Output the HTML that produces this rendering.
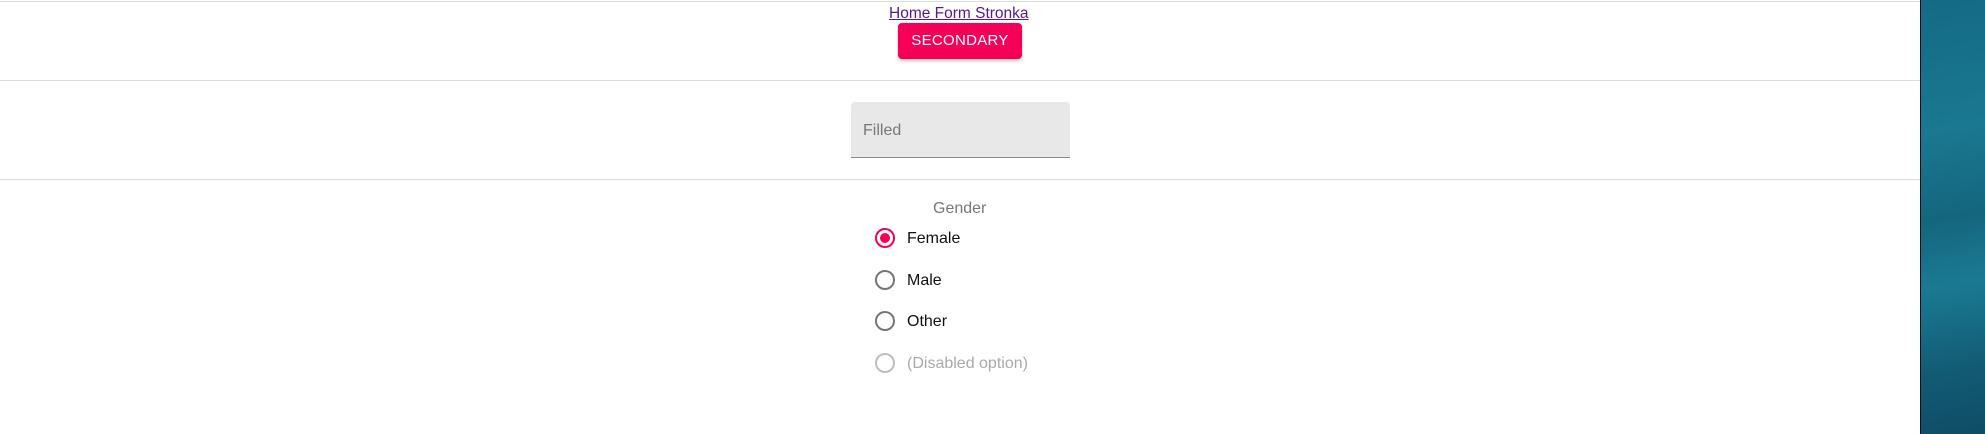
<!DOCTYPE html>
<html><head><style>
body{margin:0;width:1985px;height:434px;position:relative;background:#fff;font-family:"Liberation Sans",sans-serif;overflow:hidden}
.hr{position:absolute;left:0;width:1920px;height:1px;background:#dcdcdc}
.abs{position:absolute}
.radio{position:absolute;left:875px;width:16px;height:16px;border:2px solid #757575;border-radius:50%}
.lbl{position:absolute;left:907px;font-size:16px;color:#111;line-height:18px}
</style></head><body>
<div class="hr" style="top:1px"></div>
<a class="abs" style="left:889px;top:4px;font-size:15.5px;color:#551a8b;text-decoration:underline;line-height:19px;white-space:nowrap">Home Form Stronka</a>
<div class="abs" style="left:898px;top:23px;width:124px;height:36px;background:#f50057;border-radius:4px;box-shadow:0 2px 3px rgba(0,0,0,.25);color:#fff;font-size:15px;line-height:36px;text-align:center;letter-spacing:.3px">SECONDARY</div>
<div class="hr" style="top:80px"></div>
<div class="abs" style="left:851px;top:102px;width:219px;height:55px;background:#e8e8e8;border-radius:4px 4px 0 0;border-bottom:1px solid #8a8a8a"></div>
<div class="abs" style="left:863px;top:121px;font-size:16px;color:#777;line-height:19px">Filled</div>
<div class="hr" style="top:179px"></div>
<div class="abs" style="left:933px;top:199px;font-size:16px;color:#777;line-height:19px">Gender</div>
<div class="radio" style="top:228px;border-color:#f50057"><div style="position:absolute;left:3px;top:3px;width:10px;height:10px;border-radius:50%;background:#f50057"></div></div>
<div class="lbl" style="top:230px">Female</div>
<div class="radio" style="top:270px"></div>
<div class="lbl" style="top:272px">Male</div>
<div class="radio" style="top:311px"></div>
<div class="lbl" style="top:313px">Other</div>
<div class="radio" style="top:353px;border-color:#bdbdbd"></div>
<div class="lbl" style="top:355px;color:#aaa">(Disabled option)</div>
<div class="abs" style="left:1920px;top:0;width:1px;height:434px;background:#111"></div>
<div class="abs" style="left:1921px;top:0;width:64px;height:434px;background:linear-gradient(170deg,#146a85 0%,#1a7890 30%,#14667e 50%,#1a7a92 65%,#125a74 85%,#0f4d66 100%)"></div>
</body></html>
